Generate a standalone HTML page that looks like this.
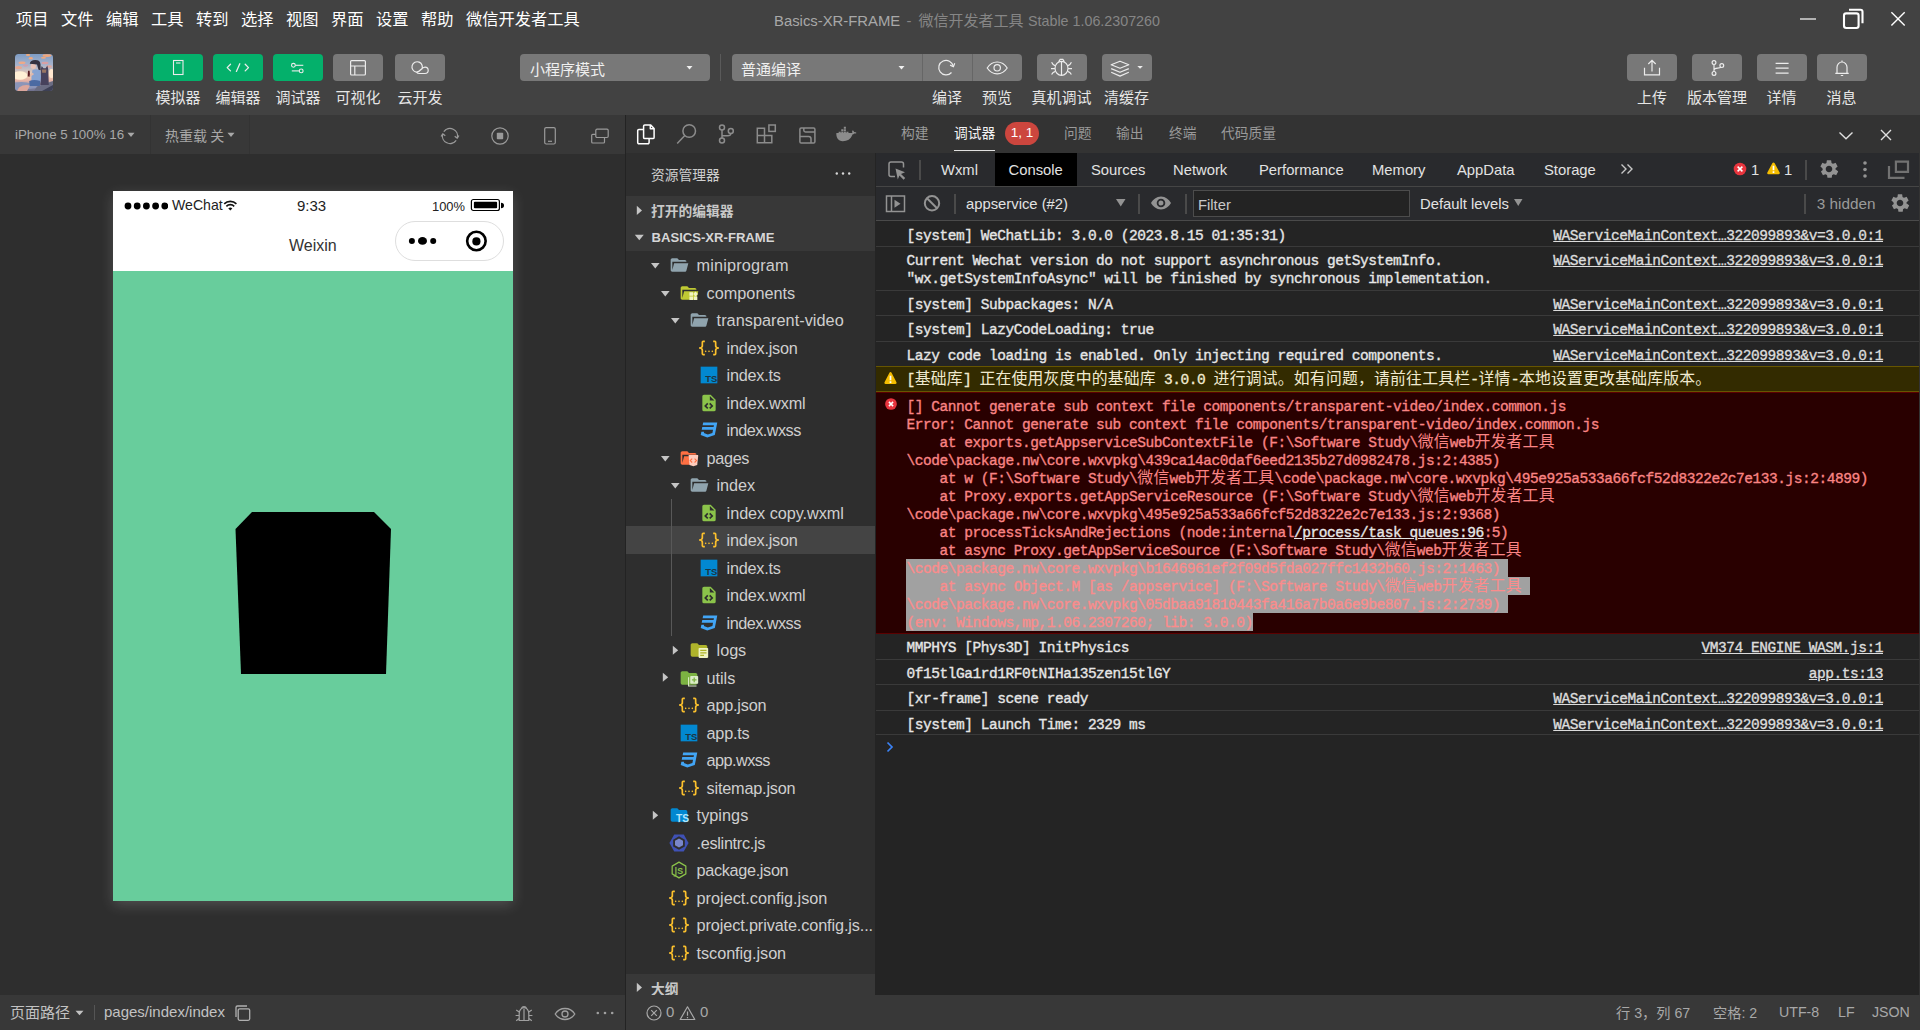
<!DOCTYPE html><html lang="zh"><head><meta charset="utf-8"><title>Basics-XR-FRAME - 微信开发者工具</title><style>
*{box-sizing:border-box;margin:0;padding:0}
html,body{width:1920px;height:1030px;overflow:hidden;background:#424242}
body{font-family:"Liberation Sans","Noto Sans CJK SC",sans-serif;color:#ddd;position:relative}
.abs{position:absolute}
.t{position:absolute;white-space:pre;line-height:1}
.cj{font-family:"Noto Sans CJK SC","Liberation Sans",sans-serif}
svg{position:absolute;overflow:visible}
.btn{position:absolute;top:54px;height:27px;background:#787878;border-radius:4px}
.btn.g{background:#04b06b}
.lbl{position:absolute;top:86.7px;font-size:15px;line-height:20px;color:#e6e6e6;white-space:pre;transform:translateX(-50%);font-family:"Noto Sans CJK SC",sans-serif}
.mono{font-family:"Liberation Mono","Noto Sans CJK SC",monospace;font-size:14.5px;letter-spacing:-0.457px;-webkit-text-stroke:0.35px currentColor;white-space:pre;line-height:18px}
.mono i{font-style:normal;font-size:15.85px;letter-spacing:.2px;-webkit-text-stroke:0;font-family:"Noto Sans CJK SC",sans-serif;line-height:18px;display:inline-block;vertical-align:top;position:relative;top:-2.1px}
.row{position:absolute;left:876px;width:1043px;border-bottom:1px solid #3a3a3a}
.msg{position:absolute;left:906px;color:#e3e3e3}
.src{position:absolute;right:37px;color:#d8d8d8;text-decoration:underline}
.tr{position:absolute;font-size:16.25px;line-height:20px;color:#cfcfcf;white-space:pre}
.tab{position:absolute;top:160.7px;font-size:14.8px;line-height:18px;color:#e2e2e2;white-space:pre}
.ptab{position:absolute;top:122.5px;font-size:13.75px;line-height:18px;color:#9a9a9a;white-space:pre;font-family:"Noto Sans CJK SC",sans-serif}
</style></head><body>
<div class="t cj" style="left:16px;top:6.8px;font-size:16.25px;line-height:22px;color:#fff">项目</div>
<div class="t cj" style="left:61px;top:6.8px;font-size:16.25px;line-height:22px;color:#fff">文件</div>
<div class="t cj" style="left:106px;top:6.8px;font-size:16.25px;line-height:22px;color:#fff">编辑</div>
<div class="t cj" style="left:151px;top:6.8px;font-size:16.25px;line-height:22px;color:#fff">工具</div>
<div class="t cj" style="left:196px;top:6.8px;font-size:16.25px;line-height:22px;color:#fff">转到</div>
<div class="t cj" style="left:241px;top:6.8px;font-size:16.25px;line-height:22px;color:#fff">选择</div>
<div class="t cj" style="left:286px;top:6.8px;font-size:16.25px;line-height:22px;color:#fff">视图</div>
<div class="t cj" style="left:331px;top:6.8px;font-size:16.25px;line-height:22px;color:#fff">界面</div>
<div class="t cj" style="left:376px;top:6.8px;font-size:16.25px;line-height:22px;color:#fff">设置</div>
<div class="t cj" style="left:421px;top:6.8px;font-size:16.25px;line-height:22px;color:#fff">帮助</div>
<div class="t cj" style="left:466px;top:6.8px;font-size:16.25px;line-height:22px;color:#fff">微信开发者工具</div>
<div class="t" style="left:774px;top:10.8px;font-size:14.85px;line-height:20px;color:#a8a8a8">Basics-XR-FRAME</div>
<div class="t" style="left:906.5px;top:10.8px;font-size:14.85px;line-height:20px;color:#868686">-</div>
<div class="t cj" style="left:918.5px;top:9.8px;font-size:15px;line-height:20px;color:#868686">微信开发者工具</div>
<div class="t" style="left:1028px;top:10.8px;font-size:14.3px;line-height:20px;color:#868686">Stable 1.06.2307260</div>
<svg style="left:1790px;top:0px" width="130" height="40" fill="none" stroke="#fff"><path d="M10 19h16" stroke="#d0d0d0" stroke-width="1.6"/><rect x="54" y="13.400" width="14.600" height="14.600" rx="2.200" stroke-width="2.100"/><path d="M59 9.800h11.500a2 2 0 0 1 2 2v11.500" stroke-width="2.100"/><path d="M101.400 12.300l13.300 13.300M114.700 12.300l-13.300 13.300" stroke-width="1.400"/></svg>
<svg style="left:15px;top:54px;border-radius:3.500px;overflow:hidden" width="38" height="37" viewBox="0 0 38 37">
<defs><linearGradient id="sky" x1="0" y1="0" x2="0" y2="1"><stop offset="0" stop-color="#7d9cc4"/><stop offset=".3" stop-color="#a8b4cc"/><stop offset=".58" stop-color="#f0cdb4"/><stop offset=".72" stop-color="#e6b3a6"/><stop offset=".86" stop-color="#8d8fb0"/><stop offset="1" stop-color="#6e6f8c"/></linearGradient>
<filter id="bl" x="-10%" y="-10%" width="120%" height="120%"><feGaussianBlur stdDeviation=".55"/></filter></defs>
<rect width="38" height="37" fill="url(#sky)"/>
<g filter="url(#bl)">
<ellipse cx="5" cy="21.500" rx="7.500" ry="4.300" fill="#fff0d6"/><ellipse cx="36.500" cy="19.500" rx="2.600" ry="4.500" fill="#ffe8d0"/>
<ellipse cx="13" cy="1" rx="2.200" ry=".9" fill="#f0a878"/><ellipse cx="15.800" cy="4.200" rx="2" ry="1.200" fill="#f2a87c"/><ellipse cx="32" cy="1.600" rx="4.500" ry="1.400" fill="#f2a67a"/><ellipse cx="28.500" cy="3.800" rx="2.500" ry="1" fill="#eea880"/><ellipse cx="7" cy="8.800" rx="3.500" ry="1.300" fill="#eea98a"/><ellipse cx="30" cy="9" rx="3.500" ry="1.200" fill="#d8a0a4"/><ellipse cx="3.500" cy="13.500" rx="3.500" ry="1.600" fill="#e8a890"/><ellipse cx="10.500" cy="11.600" rx="2.800" ry="1.100" fill="#cfa0b0"/><ellipse cx="34" cy="12.500" rx="3" ry="1.200" fill="#e0a8a0"/>
<path d="M0 28.500q9-1.500 16 1l8 4-24 3.500z" fill="#8b95b8"/>
<path d="M4 33.500q5-3.500 11-2l-3 5.500h-10z" fill="#dba69c"/>
<path d="M19 37l3-4.500 16-5.500v10z" fill="#6a6c82"/>
<path d="M27 37l11-6v6z" fill="#3e4054"/>
<path d="M25.800 15l.9-3 1.800 2.200h2.200l1.600-2.600.9 3.400.6 16h-8.500z" fill="#47435c"/>
<path d="M26.800 15.500h4.600l-.4 3.300h-3.800z" fill="#9a7664"/>
<path d="M17.500 16q3.500-1.600 7.500 0l1 6.500-.6 6h-9q-.6-6 1.100-12.500z" fill="#86a3d2"/>
<path d="M14.200 27q5-2.200 11 0l-.3 5h-10.200z" fill="#4c6aa2"/>
<ellipse cx="18.300" cy="12.300" rx="2.700" ry="2.700" fill="#e9c4b8"/>
<path d="M14.800 9.800q.5-3.800 5.500-3.700t5.200 4.200l.2 6-2.200-.5-1.500-5.300-4.500-.5z" fill="#35333f"/>
<path d="M13 16.800h1.600l.5 5.600h-2.400z" fill="#581c24"/>
<path d="M14.500 21l3.500-2.500.8 2-3.800 2.300z" fill="#e0b8ac"/>
</g></svg>
<div class="btn g" style="left:153px;width:50px"></div>
<div class="btn g" style="left:213px;width:50px"></div>
<div class="btn g" style="left:273px;width:50px"></div>
<div class="btn " style="left:333px;width:50px"></div>
<div class="btn " style="left:395px;width:50px"></div>
<div class="lbl" style="left:178px">模拟器</div>
<div class="lbl" style="left:238px">编辑器</div>
<div class="lbl" style="left:298px">调试器</div>
<div class="lbl" style="left:358px">可视化</div>
<div class="lbl" style="left:420px">云开发</div>
<svg style="left:153px;top:54px" width="50" height="27" fill="none" stroke="#ececec" stroke-width="1.1"><rect x="20.5" y="6.5" width="9.500" height="14"/><path d="M23 9h4.500"/></svg>
<svg style="left:213px;top:54px" width="50" height="27" fill="none" stroke="#ececec" stroke-width="1.3" stroke-linecap="round" stroke-linejoin="round"><path d="M17.500 10.300l-3.300 3.300 3.300 3.300M32.200 10.300l3.300 3.300-3.300 3.300M26.800 9.800l-3.400 7.600"/></svg>
<svg style="left:273px;top:54px" width="50" height="27" fill="none" stroke="#ececec" stroke-width="1.1"><circle cx="20.400" cy="11.300" r="1.900"/><path d="M22.300 11.300h8"/><circle cx="28.200" cy="16.900" r="1.900"/><path d="M18.800 16.900h7.500"/></svg>
<svg style="left:333px;top:54px" width="50" height="27" fill="none" stroke="#ececec" stroke-width="1.2"><rect x="17.600" y="6.600" width="14.800" height="14.400" rx="1"/><path d="M17.600 12h14.800M21.800 12v9"/></svg>
<svg style="left:392.800px;top:54px" width="50" height="27" fill="none" stroke="#ececec" stroke-width="1.2"><path d="M28.700 15.500a5.200 5.200 0 1 0-5.300 2.600M23.400 18.100c2.200 0 3.400-1.200 4.600-2.600s2.300-2.400 4-2.400a3.200 3.200 0 0 1 0 6.400h-5.500c-1.500 0-2.400-.5-3.100-1.400"/></svg>
<div class="btn " style="left:520px;width:190px"></div>
<div class="t cj" style="left:530px;top:59px;font-size:15px;line-height:20px;color:#f0f0f0">小程序模式</div>
<svg style="left:685px;top:65px" width="10" height="6"><path d="M1.500 1h6l-3 3.600z" fill="#f0f0f0"/></svg>
<div class="abs" style="left:720px;top:54px;width:1px;height:27px;background:#5a5a5a"></div>
<div class="btn " style="left:732px;width:290px"></div>
<div class="t cj" style="left:741px;top:59px;font-size:15px;line-height:20px;color:#f0f0f0">普通编译</div>
<svg style="left:897px;top:65px" width="10" height="6"><path d="M1.500 1h6l-3 3.600z" fill="#f0f0f0"/></svg>
<div class="abs" style="left:922px;top:54px;width:1px;height:27px;background:#666"></div>
<div class="abs" style="left:972px;top:54px;width:1px;height:27px;background:#666"></div>
<svg style="left:922.300px;top:54.800px" width="50" height="27" fill="none" stroke="#ececec" stroke-width="1.2"><path d="M29.500 17.500a7.300 7.300 0 1 1 1.700-6.300"/><path d="M32.700 8.300l-1.300 3.500-3.300-1.700" stroke-linejoin="round"/></svg>
<svg style="left:972px;top:54px" width="50" height="27" fill="none" stroke="#ececec" stroke-width="1.2"><path d="M15.200 14c3-4.700 7-6 10-6s7 1.300 10 6c-3 4.500-7 5.800-10 5.800s-7-1.300-10-5.800z"/><circle cx="25.200" cy="13.800" r="3.200"/></svg>
<div class="btn " style="left:1037px;width:50px"></div>
<div class="btn " style="left:1102px;width:50px"></div>
<svg style="left:1037px;top:54px" width="50" height="27" fill="none" stroke="#ececec" stroke-width="1.2"><ellipse cx="24.500" cy="14.300" rx="6.500" ry="7"/><path d="M24.500 7.300v14"/><path d="M21.700 7.600l1.500-2.300h2.600l1.500 2.300"/><path d="M18.400 11.800q-2.600-.6-3.800-3.500M17.900 14.600h-3.900M18.400 17.300q-2.600 .6-3.800 3.200M30.600 11.800q2.600-.6 3.800-3.500M31.100 14.600h3.900M30.600 17.300q2.600 .6 3.800 3.200"/></svg>
<svg style="left:1102px;top:54px" width="50" height="27" fill="none" stroke="#ececec" stroke-width="1.2" stroke-linejoin="round"><path d="M18 7.200l-8.800 3.500 8.800 3.500 8.800-3.500z"/><path d="M9.200 14.600l8.800 3.700 8.800-3.700M9.200 18.300l8.800 3.800 8.800-3.800"/><path d="M35.300 11.900h5.600l-2.800 2.800z" fill="#ececec" stroke="none"/></svg>
<div class="lbl" style="left:947px">编译</div>
<div class="lbl" style="left:997px">预览</div>
<div class="lbl" style="left:1061.5px">真机调试</div>
<div class="lbl" style="left:1126.5px">清缓存</div>
<div class="btn " style="left:1627px;width:50px"></div>
<div class="btn " style="left:1692px;width:50px"></div>
<div class="btn " style="left:1757px;width:50px"></div>
<div class="btn " style="left:1817px;width:50px"></div>
<div class="lbl" style="left:1652px">上传</div>
<div class="lbl" style="left:1717px">版本管理</div>
<div class="lbl" style="left:1781.5px">详情</div>
<div class="lbl" style="left:1841.5px">消息</div>
<svg style="left:1627px;top:54px" width="50" height="27" fill="none" stroke="#ececec" stroke-width="1.2"><path d="M17.500 13.800v7h15v-7"/><path d="M25 17.500v-11M21.300 10l3.700-3.700 3.700 3.700"/></svg>
<svg style="left:1692px;top:54px" width="50" height="27" fill="none" stroke="#ececec" stroke-width="1.2"><circle cx="22" cy="8.600" r="1.900"/><circle cx="22" cy="19.400" r="1.900"/><circle cx="29.800" cy="11.600" r="1.900"/><path d="M22 10.500v7M22 16c0-3 6-1 6.800-3"/></svg>
<svg style="left:1757px;top:54px" width="50" height="27" fill="none" stroke="#ececec" stroke-width="1.300"><path d="M18.600 9.300h13M18.600 14.200h13M18.600 19.100h13"/></svg>
<svg style="left:1817px;top:54px" width="50" height="27" fill="none" stroke="#ececec" stroke-width="1.200"><path d="M18.300 19.300h13.400M20 19.300v-6a5 5.300 0 0 1 10 0v6M25 6.500v1.500M23.800 21.500h2.400"/></svg>
<div class="abs" style="left:0;top:115px;width:625px;height:39px;background:#383838"></div>
<div class="abs" style="left:150px;top:115px;width:1px;height:39px;background:#333"></div>
<div class="abs" style="left:249px;top:115px;width:1px;height:39px;background:#333"></div>
<div class="t" style="left:15px;top:126px;font-size:13.35px;line-height:18px;color:#a8a8a8">iPhone 5 100% 16</div>
<svg style="left:127px;top:132px" width="8" height="6"><path d="M0.500 0.800h7l-3.500 4.200z" fill="#a8a8a8"/></svg>
<div class="t cj" style="left:165px;top:125px;font-size:14px;line-height:20px;color:#a8a8a8">热重载 关</div>
<svg style="left:227px;top:132px" width="8" height="6"><path d="M0.500 0.800h7l-3.500 4.200z" fill="#a8a8a8"/></svg>
<svg style="left:440px;top:125px" width="20" height="20" fill="none" stroke="#9a9a9a" stroke-width="1.2"><path d="M3.800 6.600A7.600 7.600 0 0 1 17.300 13"/><path d="M16.200 15.400A7.600 7.600 0 0 1 2.700 9"/><path d="M14.700 11.300l2.600 1.900 1.600-2.700M5.300 10.700l-2.600-1.900-1.600 2.700" stroke-linejoin="round"/></svg>
<svg style="left:490px;top:125px" width="20" height="20" fill="none" stroke="#9a9a9a" stroke-width="1.200"><circle cx="10" cy="11" r="8.200"/><rect x="6.800" y="7.800" width="6.400" height="6.400" rx=".8" fill="#9a9a9a" stroke="none"/></svg>
<svg style="left:540px;top:125px" width="20" height="20" fill="none" stroke="#9a9a9a" stroke-width="1.200"><rect x="4.700" y="2.600" width="10.600" height="16.400" rx="1.500"/><path d="M8 16.300h4"/></svg>
<svg style="left:590px;top:125px" width="20" height="20" fill="none" stroke="#9a9a9a" stroke-width="1.200"><rect x="5.800" y="4.200" width="12.400" height="8.300" rx="1.200"/><path d="M5.800 9.300h-3.100a1 1 0 0 0-1 1v6.700a1 1 0 0 0 1 1h10.800a1 1 0 0 0 1-1v-4.500"/></svg>
<div class="abs" style="left:0;top:154px;width:625px;height:841px;background:#2e2e2e"></div>
<div class="abs" style="left:113px;top:191px;width:400px;height:710px;background:#68cd9c;box-shadow:0 4px 13px rgba(255,255,255,.17)"></div>
<div class="abs" style="left:113px;top:191px;width:400px;height:80px;background:#fff"></div>
<svg style="left:124px;top:200px;overflow:hidden" width="43.500" height="12" fill="#000"><circle cx="4" cy="6" r="3.400"/><circle cx="13.200" cy="6" r="3.400"/><circle cx="22.400" cy="6" r="3.400"/><circle cx="31.600" cy="6" r="3.400"/><circle cx="40.800" cy="6" r="3.400"/></svg>
<div class="t" style="left:172px;top:196px;font-size:14.1px;line-height:18px;color:#222">WeChat</div>
<svg style="left:223.400px;top:199.600px" width="14.600" height="11" viewBox="0 0 16 12" fill="none" stroke="#111" stroke-width="1.800"><path d="M1.300 4.200a9.500 9.500 0 0 1 13.400 0M3.700 6.900a6 6 0 0 1 8.600 0"/><path d="M5.800 9.300a3.100 3.100 0 0 1 4.400 0l-2.200 2.300z" fill="#111" stroke="none"/></svg>
<div class="t" style="left:297px;top:197px;font-size:15px;line-height:18px;color:#222">9:33</div>
<div class="t" style="left:432px;top:197.5px;font-size:12.9px;line-height:18px;color:#222">100%</div>
<svg style="left:470px;top:198px" width="36" height="15" fill="none"><rect x="1.400" y="1.500" width="28" height="11" rx="2" stroke="#000" stroke-width="1.200"/><rect x="3.900" y="3.800" width="23.200" height="6.500" rx="1" fill="#000"/><path d="M31 4.800q3 0 3 2.700t-3 2.700z" fill="#000"/></svg>
<div class="t" style="left:289px;top:236px;font-size:16px;line-height:20px;color:#333">Weixin</div>
<div class="abs" style="left:395px;top:221px;width:109px;height:40px;border:1px solid #dedede;border-radius:20px;background:#fff"></div>
<svg style="left:395px;top:221px" width="109" height="40"><circle cx="16.900" cy="19.900" r="3" fill="#000"/><ellipse cx="27.500" cy="19.900" rx="4.500" ry="3.900" fill="#000"/><circle cx="38.200" cy="19.900" r="3" fill="#000"/><circle cx="81.400" cy="20" r="9.250" fill="none" stroke="#000" stroke-width="2.600"/><circle cx="81.400" cy="20.400" r="4.100" fill="#000"/></svg>
<svg style="left:113px;top:271px" width="400" height="630"><path d="M139 241h122l17 17l-5 145h-145l-5.500-145z" fill="#000"/></svg>
<div class="abs" style="left:0;top:995px;width:625px;height:35px;background:#383838"></div>
<div class="t cj" style="left:10px;top:1002px;font-size:15px;line-height:20px;color:#c2c2c2">页面路径</div>
<svg style="left:75px;top:1010px" width="9" height="6"><path d="M0.500 0.800h8l-4 4.400z" fill="#c2c2c2"/></svg>
<div class="abs" style="left:94px;top:1005px;width:1px;height:15px;background:#555"></div>
<div class="t" style="left:104px;top:1003px;font-size:15px;line-height:18px;color:#c2c2c2">pages/index/index</div>
<svg style="left:234px;top:1004px" width="18" height="18" fill="none" stroke="#b0b0b0" stroke-width="1.300"><rect x="4.200" y="4.800" width="11.500" height="11.500" rx="1.500"/><path d="M2 13v-9.500a1.500 1.500 0 0 1 1.500-1.500h9.500"/></svg>
<svg style="left:512px;top:1002px" width="24" height="22" fill="none" stroke="#a0a0a0" stroke-width="1.200"><path d="M7.200 18.500v-7a4.800 6 0 0 1 9.600 0v7z"/><path d="M12 6.500v12M9.500 6.500a2.600 2.600 0 0 1 5 0"/><path d="M7.200 10l-3-2M16.800 10l3-2M7.200 13.500h-3.600M16.800 13.500h3.600M7.200 16.500l-3 2.200M16.800 16.500l3 2.200"/></svg>
<svg style="left:553px;top:1004px" width="24" height="20" fill="none" stroke="#a0a0a0" stroke-width="1.300"><path d="M2.200 10c2.500-4 6-5.500 9.800-5.500s7.300 1.500 9.800 5.500c-2.500 4-6 5.500-9.800 5.500s-7.300-1.500-9.800-5.500z"/><circle cx="12" cy="10" r="3"/></svg>
<svg style="left:595px;top:1010px" width="20" height="6" fill="#a0a0a0"><circle cx="2.800" cy="3" r="1.300"/><circle cx="10" cy="3" r="1.300"/><circle cx="17.200" cy="3" r="1.300"/></svg>
<div class="abs" style="left:625px;top:115px;width:1px;height:915px;background:#232323"></div>
<div class="abs" style="left:626px;top:115px;width:1294px;height:38px;background:#333"></div>
<div class="abs" style="left:626px;top:153px;width:249px;height:842px;background:#2e2e2e"></div>
<svg style="left:634px;top:121px" width="24" height="24" fill="none" stroke="#fff" stroke-width="1.500" stroke-linejoin="round"><path d="M10.800 3.900h5.700l3.600 3.600v8.900a1.200 1.200 0 0 1-1.200 1.200h-8.100a1.200 1.200 0 0 1-1.200-1.200v-11.300a1.200 1.200 0 0 1 1.200-1.200z"/><path d="M9.600 8.400h-4.700a1.200 1.200 0 0 0-1.200 1.200v11.900a1.200 1.200 0 0 0 1.200 1.200h9a1.200 1.200 0 0 0 1.200-1.200v-3.900"/><path d="M16.300 4v3.700h3.700"/></svg>
<svg style="left:674px;top:121px" width="24" height="24" fill="none" stroke="#8c8c8c" stroke-width="1.500"><circle cx="15.200" cy="10" r="6.300"/><path d="M10.800 14.500l-7.600 8"/></svg>
<svg style="left:714px;top:121px" width="24" height="24" fill="none" stroke="#8c8c8c" stroke-width="1.500"><circle cx="8" cy="6.400" r="2.500"/><circle cx="8" cy="19.400" r="2.500"/><circle cx="16.800" cy="9.900" r="2.500"/><path d="M8 8.900v8M16.800 12.400c0 2.200-1.400 2.300-3.200 2.300h-5.600"/></svg>
<svg style="left:754px;top:121px" width="24" height="24" fill="none" stroke="#8c8c8c" stroke-width="1.500"><path d="M3.300 7.300h7.200v7.300h7.300v7.200h-14.500zM10.500 14.600v7.200M3.300 14.600h7.200"/><rect x="14.900" y="4" width="6.400" height="6.400"/></svg>
<svg style="left:795px;top:121px" width="24" height="24" fill="none" stroke="#8c8c8c" stroke-width="1.500"><rect x="4.900" y="7" width="15" height="15" rx="1.300"/><path d="M8.800 7v2.300q0 1.700 1.700 1.700h9.400M4.900 15.500h8.800q2.300 0 2.300 2.300v4.200"/></svg>
<svg style="left:835px;top:125.500px" width="22" height="17" viewBox="0 0 24 18.500" fill="#8c8c8c"><path d="M1 9.500h17.500c1 0 2-.5 2.500-1.300.8.200 1.800.1 2.500-.5-.6-.8-1.600-1.200-2.600-1-.2-1-.8-1.700-1.600-2.200-.7.900-.8 2-.3 3h-17.500c-.5 4.500 2 9 7 9 5 0 8.500-2 10.500-7z"/><path d="M4 6.200h2.300v2.300h-2.300zM6.800 6.200h2.300v2.300h-2.300zM9.600 6.200h2.300v2.300h-2.300zM12.400 6.200h2.300v2.300h-2.300zM6.800 3.500h2.300v2.300h-2.300zM9.600 3.500h2.300v2.300h-2.300zM9.600 .8h2.300v2.300h-2.300z"/></svg>
<div class="t cj" style="left:651px;top:163.700px;font-size:13.75px;line-height:20px;color:#cfcfcf">资源管理器</div>
<svg style="left:834.500px;top:171.300px" width="18" height="5" fill="#d8d8d8"><circle cx="1.800" cy="2.500" r="1.200"/><circle cx="8" cy="2.500" r="1.200"/><circle cx="14.200" cy="2.500" r="1.200"/></svg>
<div class="abs" style="left:626px;top:196px;width:249px;height:55px;background:#383838"></div>
<svg style="left:636px;top:205px" width="8" height="11"><path d="M0.800 0.800l5.200 4.600-5.200 4.600z" fill="#c5c5c5"/></svg>
<div class="t cj" style="left:651px;top:200px;font-size:13.75px;line-height:20px;color:#c8c8c8;font-weight:bold">打开的编辑器</div>
<svg style="left:634px;top:234px" width="11" height="8"><path d="M0.800 0.800h9l-4.500 5.400z" fill="#c5c5c5"/></svg>
<div class="t" style="left:651.500px;top:229px;font-size:13.1px;line-height:18px;color:#d6d6d6;font-weight:bold">BASICS-XR-FRAME</div>
<div class="abs" style="left:626px;top:526px;width:249px;height:28px;background:#444"></div>
<div class="abs" style="left:671px;top:499px;width:1px;height:137px;background:#585858"></div>
<svg style="left:649.5px;top:262.00px" width="11" height="8"><path d="M1 1h8.600l-4.300 5.600z" fill="#c5c5c5"/></svg>
<svg style="left:669px;top:255.00px" width="20" height="20" viewBox="0 0 24 24"><path d="M19 20H4c-1.110 0-2-.9-2-2V6c0-1.110.89-2 2-2h6l2 2h7a2 2 0 0 1 2 2H4v10l2.140-8h17.070l-2.280 8.500c-.23.870-1.010 1.500-1.930 1.500z" fill="#90a4ae"/></svg>
<div class="tr" style="left:696.6px;top:255.20px;letter-spacing:0.172px">miniprogram</div>
<svg style="left:659.5px;top:289.50px" width="11" height="8"><path d="M1 1h8.600l-4.300 5.600z" fill="#c5c5c5"/></svg>
<svg style="left:679px;top:282.50px" width="20" height="20" viewBox="0 0 24 24"><path d="M19 20H4c-1.110 0-2-.9-2-2V6c0-1.110.89-2 2-2h6l2 2h7a2 2 0 0 1 2 2H4v10l2.140-8h17.070l-2.280 8.500c-.23.870-1.010 1.500-1.930 1.500z" fill="#c0ca33"/><path d="M12.500 11h4.300v4.300h-4.300zM12.500 16.200h4.300v4.300h-4.300zM17.700 16.200h4.300v4.300h-4.300z" fill="#f0f4c3"/><path d="M19.850 10.300l2.900 2.900-2.900 2.900-2.900-2.900z" fill="#f0f4c3"/></svg>
<div class="tr" style="left:706.6px;top:282.70px;letter-spacing:0.007px">components</div>
<svg style="left:669.5px;top:317.00px" width="11" height="8"><path d="M1 1h8.600l-4.300 5.600z" fill="#c5c5c5"/></svg>
<svg style="left:689px;top:310.00px" width="20" height="20" viewBox="0 0 24 24"><path d="M19 20H4c-1.110 0-2-.9-2-2V6c0-1.110.89-2 2-2h6l2 2h7a2 2 0 0 1 2 2H4v10l2.140-8h17.070l-2.280 8.500c-.23.870-1.010 1.500-1.930 1.500z" fill="#90a4ae"/></svg>
<div class="tr" style="left:716.6px;top:310.20px;letter-spacing:0.038px">transparent-video</div>
<svg style="left:699px;top:337.50px" width="20" height="20" viewBox="0 0 24 24"><path d="M5 3h2v2H5v5a2 2 0 0 1-2 2 2 2 0 0 1 2 2v5h2v2H5c-1.070-.27-2-.9-2-2v-4a2 2 0 0 0-2-2H0v-2h1a2 2 0 0 0 2-2V5a2 2 0 0 1 2-2m14 0a2 2 0 0 1 2 2v4a2 2 0 0 0 2 2h1v2h-1a2 2 0 0 0-2 2v4a2 2 0 0 1-2 2h-2v-2h2v-5a2 2 0 0 1 2-2 2 2 0 0 1-2-2V5h-2V3h2m-7 12a1 1 0 0 1 1 1 1 1 0 0 1-1 1 1 1 0 0 1-1-1 1 1 0 0 1 1-1m-4 0a1 1 0 0 1 1 1 1 1 0 0 1-1 1 1 1 0 0 1-1-1 1 1 0 0 1 1-1m8 0a1 1 0 0 1 1 1 1 1 0 0 1-1 1 1 1 0 0 1-1-1 1 1 0 0 1 1-1z" fill="#fbc02d"/></svg>
<div class="tr" style="left:726.6px;top:337.70px;letter-spacing:-0.207px">index.json</div>
<svg style="left:699px;top:365.00px" width="20" height="20" viewBox="0 0 24 24"><rect x="2" y="2" width="20" height="20" fill="#0288d1"/><text x="7.400" y="20" font-family="Liberation Sans,sans-serif" font-weight="bold" font-size="11.300" fill="#1d3442">TS</text></svg>
<div class="tr" style="left:726.6px;top:365.20px;letter-spacing:-0.263px">index.ts</div>
<svg style="left:699px;top:392.50px" width="20" height="20" viewBox="0 0 24 24"><path d="M13 9h5.500L13 3.500V9M6 2h8l6 6v12a2 2 0 0 1-2 2H6a2 2 0 0 1-2-2V4c0-1.110.89-2 2-2m.12 13.500l3.740 3.740 1.420-1.410-2.330-2.330 2.330-2.330-1.420-1.410-3.740 3.740m11.160 0l-3.740-3.740-1.420 1.410 2.330 2.330-2.330 2.330 1.420 1.410 3.740-3.740z" fill="#8bc34a"/></svg>
<div class="tr" style="left:726.6px;top:392.70px;letter-spacing:-0.147px">index.wxml</div>
<svg style="left:699px;top:420.00px" width="20" height="20" viewBox="0 0 24 24"><path d="M5 3l-.65 3.340h13.590L17.500 8.500H3.920l-.66 3.330h13.590l-.76 3.810-5.480 1.810-4.750-1.810.33-1.640H2.850l-.79 4 7.850 3 9.050-3 1.200-6.030.24-1.210L21.940 3H5z" fill="#42a5f5"/></svg>
<div class="tr" style="left:726.6px;top:420.20px;letter-spacing:-0.527px">index.wxss</div>
<svg style="left:659.5px;top:454.50px" width="11" height="8"><path d="M1 1h8.600l-4.300 5.600z" fill="#c5c5c5"/></svg>
<svg style="left:679px;top:447.50px" width="20" height="20" viewBox="0 0 24 24"><path d="M19 20H4c-1.110 0-2-.9-2-2V6c0-1.110.89-2 2-2h6l2 2h7a2 2 0 0 1 2 2H4v10l2.140-8h17.070l-2.280 8.500c-.23.870-1.010 1.500-1.930 1.500z" fill="#ff7043"/><path d="M11.500 8.500h11.500l-1.100 12-4.650 1.500-4.650-1.500z" fill="#ffccbc"/><path d="M15.800 12.800l-2.300 2.300 2.300 2.300M18.700 12.800l2.300 2.300-2.300 2.300" fill="none" stroke="#ff7043" stroke-width="1.300"/></svg>
<div class="tr" style="left:706.6px;top:447.70px;letter-spacing:-0.355px">pages</div>
<svg style="left:669.5px;top:482.00px" width="11" height="8"><path d="M1 1h8.600l-4.300 5.600z" fill="#c5c5c5"/></svg>
<svg style="left:689px;top:475.00px" width="20" height="20" viewBox="0 0 24 24"><path d="M19 20H4c-1.110 0-2-.9-2-2V6c0-1.110.89-2 2-2h6l2 2h7a2 2 0 0 1 2 2H4v10l2.140-8h17.070l-2.280 8.500c-.23.870-1.010 1.500-1.930 1.500z" fill="#90a4ae"/></svg>
<div class="tr" style="left:716.6px;top:475.20px;letter-spacing:-0.11px">index</div>
<svg style="left:699px;top:502.50px" width="20" height="20" viewBox="0 0 24 24"><path d="M13 9h5.500L13 3.500V9M6 2h8l6 6v12a2 2 0 0 1-2 2H6a2 2 0 0 1-2-2V4c0-1.110.89-2 2-2m.12 13.500l3.740 3.740 1.420-1.410-2.330-2.330 2.330-2.330-1.420-1.410-3.740 3.740m11.160 0l-3.740-3.740-1.420 1.410 2.330 2.330-2.330 2.330 1.420 1.410 3.740-3.740z" fill="#8bc34a"/></svg>
<div class="tr" style="left:726.6px;top:502.70px;letter-spacing:-0.054px">index copy.wxml</div>
<svg style="left:699px;top:530.00px" width="20" height="20" viewBox="0 0 24 24"><path d="M5 3h2v2H5v5a2 2 0 0 1-2 2 2 2 0 0 1 2 2v5h2v2H5c-1.070-.27-2-.9-2-2v-4a2 2 0 0 0-2-2H0v-2h1a2 2 0 0 0 2-2V5a2 2 0 0 1 2-2m14 0a2 2 0 0 1 2 2v4a2 2 0 0 0 2 2h1v2h-1a2 2 0 0 0-2 2v4a2 2 0 0 1-2 2h-2v-2h2v-5a2 2 0 0 1 2-2 2 2 0 0 1-2-2V5h-2V3h2m-7 12a1 1 0 0 1 1 1 1 1 0 0 1-1 1 1 1 0 0 1-1-1 1 1 0 0 1 1-1m-4 0a1 1 0 0 1 1 1 1 1 0 0 1-1 1 1 1 0 0 1-1-1 1 1 0 0 1 1-1m8 0a1 1 0 0 1 1 1 1 1 0 0 1-1 1 1 1 0 0 1-1-1 1 1 0 0 1 1-1z" fill="#fbc02d"/></svg>
<div class="tr" style="left:726.6px;top:530.20px;letter-spacing:-0.207px">index.json</div>
<svg style="left:699px;top:557.50px" width="20" height="20" viewBox="0 0 24 24"><rect x="2" y="2" width="20" height="20" fill="#0288d1"/><text x="7.400" y="20" font-family="Liberation Sans,sans-serif" font-weight="bold" font-size="11.300" fill="#1d3442">TS</text></svg>
<div class="tr" style="left:726.6px;top:557.70px;letter-spacing:-0.263px">index.ts</div>
<svg style="left:699px;top:585.00px" width="20" height="20" viewBox="0 0 24 24"><path d="M13 9h5.500L13 3.500V9M6 2h8l6 6v12a2 2 0 0 1-2 2H6a2 2 0 0 1-2-2V4c0-1.110.89-2 2-2m.12 13.500l3.740 3.740 1.420-1.410-2.330-2.330 2.330-2.330-1.420-1.410-3.740 3.740m11.160 0l-3.740-3.740-1.420 1.410 2.330 2.330-2.330 2.330 1.420 1.410 3.740-3.740z" fill="#8bc34a"/></svg>
<div class="tr" style="left:726.6px;top:585.20px;letter-spacing:-0.147px">index.wxml</div>
<svg style="left:699px;top:612.50px" width="20" height="20" viewBox="0 0 24 24"><path d="M5 3l-.65 3.340h13.590L17.500 8.500H3.920l-.66 3.330h13.590l-.76 3.810-5.480 1.810-4.750-1.810.33-1.640H2.850l-.79 4 7.850 3 9.050-3 1.200-6.030.24-1.210L21.940 3H5z" fill="#42a5f5"/></svg>
<div class="tr" style="left:726.6px;top:612.70px;letter-spacing:-0.527px">index.wxss</div>
<svg style="left:672px;top:644.50px" width="8" height="11"><path d="M0.800 0.800l5.400 4.500-5.400 4.500z" fill="#c5c5c5"/></svg>
<svg style="left:689px;top:640.00px" width="20" height="20" viewBox="0 0 24 24"><path d="M10 4H4c-1.110 0-2 .89-2 2v12a2 2 0 0 0 2 2h16a2 2 0 0 0 2-2V8c0-1.110-.9-2-2-2h-8l-2-2z" fill="#afb42b"/><rect x="11.500" y="9.500" width="11.500" height="12" rx="1" fill="#f0f4c3"/><path d="M13.500 12.500h7.500M13.500 15.500h7.500M13.500 18.500h4.500" stroke="#afb42b" stroke-width="1.500"/></svg>
<div class="tr" style="left:716.6px;top:640.20px;letter-spacing:-0.053px">logs</div>
<svg style="left:662px;top:672.00px" width="8" height="11"><path d="M0.800 0.800l5.400 4.500-5.400 4.500z" fill="#c5c5c5"/></svg>
<svg style="left:679px;top:667.50px" width="20" height="20" viewBox="0 0 24 24"><path d="M10 4H4c-1.110 0-2 .89-2 2v12a2 2 0 0 0 2 2h16a2 2 0 0 0 2-2V8c0-1.110-.9-2-2-2h-8l-2-2z" fill="#7cb342"/><path d="M11.500 11v10.500h9.500" fill="none" stroke="#dcedc8" stroke-width="1.300"/><rect x="13.500" y="9.500" width="9.500" height="9.500" rx="1" fill="#dcedc8"/><path d="M18.250 11.500v5.500M15.500 14.250h5.500" stroke="#7cb342" stroke-width="1.500"/></svg>
<div class="tr" style="left:706.6px;top:667.70px;letter-spacing:-0.06px">utils</div>
<svg style="left:679px;top:695.00px" width="20" height="20" viewBox="0 0 24 24"><path d="M5 3h2v2H5v5a2 2 0 0 1-2 2 2 2 0 0 1 2 2v5h2v2H5c-1.070-.27-2-.9-2-2v-4a2 2 0 0 0-2-2H0v-2h1a2 2 0 0 0 2-2V5a2 2 0 0 1 2-2m14 0a2 2 0 0 1 2 2v4a2 2 0 0 0 2 2h1v2h-1a2 2 0 0 0-2 2v4a2 2 0 0 1-2 2h-2v-2h2v-5a2 2 0 0 1 2-2 2 2 0 0 1-2-2V5h-2V3h2m-7 12a1 1 0 0 1 1 1 1 1 0 0 1-1 1 1 1 0 0 1-1-1 1 1 0 0 1 1-1m-4 0a1 1 0 0 1 1 1 1 1 0 0 1-1 1 1 1 0 0 1-1-1 1 1 0 0 1 1-1m8 0a1 1 0 0 1 1 1 1 1 0 0 1-1 1 1 1 0 0 1-1-1 1 1 0 0 1 1-1z" fill="#fbc02d"/></svg>
<div class="tr" style="left:706.6px;top:695.20px;letter-spacing:-0.217px">app.json</div>
<svg style="left:679px;top:722.50px" width="20" height="20" viewBox="0 0 24 24"><rect x="2" y="2" width="20" height="20" fill="#0288d1"/><text x="7.400" y="20" font-family="Liberation Sans,sans-serif" font-weight="bold" font-size="11.300" fill="#1d3442">TS</text></svg>
<div class="tr" style="left:706.6px;top:722.70px;letter-spacing:-0.261px">app.ts</div>
<svg style="left:679px;top:750.00px" width="20" height="20" viewBox="0 0 24 24"><path d="M5 3l-.65 3.340h13.590L17.500 8.500H3.920l-.66 3.330h13.590l-.76 3.810-5.480 1.810-4.750-1.810.33-1.640H2.850l-.79 4 7.850 3 9.050-3 1.200-6.030.24-1.210L21.940 3H5z" fill="#42a5f5"/></svg>
<div class="tr" style="left:706.6px;top:750.20px;letter-spacing:-0.555px">app.wxss</div>
<svg style="left:679px;top:777.50px" width="20" height="20" viewBox="0 0 24 24"><path d="M5 3h2v2H5v5a2 2 0 0 1-2 2 2 2 0 0 1 2 2v5h2v2H5c-1.070-.27-2-.9-2-2v-4a2 2 0 0 0-2-2H0v-2h1a2 2 0 0 0 2-2V5a2 2 0 0 1 2-2m14 0a2 2 0 0 1 2 2v4a2 2 0 0 0 2 2h1v2h-1a2 2 0 0 0-2 2v4a2 2 0 0 1-2 2h-2v-2h2v-5a2 2 0 0 1 2-2 2 2 0 0 1-2-2V5h-2V3h2m-7 12a1 1 0 0 1 1 1 1 1 0 0 1-1 1 1 1 0 0 1-1-1 1 1 0 0 1 1-1m-4 0a1 1 0 0 1 1 1 1 1 0 0 1-1 1 1 1 0 0 1-1-1 1 1 0 0 1 1-1m8 0a1 1 0 0 1 1 1 1 1 0 0 1-1 1 1 1 0 0 1-1-1 1 1 0 0 1 1-1z" fill="#fbc02d"/></svg>
<div class="tr" style="left:706.6px;top:777.70px;letter-spacing:-0.202px">sitemap.json</div>
<svg style="left:652px;top:809.50px" width="8" height="11"><path d="M0.800 0.800l5.400 4.500-5.400 4.500z" fill="#c5c5c5"/></svg>
<svg style="left:669px;top:805.00px" width="20" height="20" viewBox="0 0 24 24"><path d="M10 4H4c-1.110 0-2 .89-2 2v12a2 2 0 0 0 2 2h16a2 2 0 0 0 2-2V8c0-1.110-.9-2-2-2h-8l-2-2z" fill="#0288d1"/><text x="8.400" y="20.400" font-family="Liberation Sans,sans-serif" font-weight="bold" font-size="12.300" fill="#b3e5fc" stroke="#0288d1" stroke-width=".5" paint-order="stroke">TS</text></svg>
<div class="tr" style="left:696.6px;top:805.20px;letter-spacing:0.03px">typings</div>
<svg style="left:669px;top:832.50px" width="20" height="20" viewBox="0 0 24 24"><path d="M6.300 1.700h11.400l5.800 10.300-5.800 10.300h-11.400l-5.800-10.300z" fill="#3f51b5"/><path d="M12 3.900l7 4.050v8.100l-7 4.050-7-4.050v-8.100z" fill="#2e2e2e"/><path d="M12 6.500l4.800 2.750v5.500l-4.800 2.750-4.800-2.750v-5.500z" fill="#7986cb"/></svg>
<div class="tr" style="left:696.6px;top:832.70px;letter-spacing:-0.32px">.eslintrc.js</div>
<svg style="left:669px;top:860.00px" width="20" height="20" viewBox="0 0 24 24"><path d="M12 2.600l8.200 4.700v9.400l-8.200 4.700-8.200-4.700v-9.400z" fill="none" stroke="#8bc34a" stroke-width="1.500" stroke-linejoin="round"/><path d="M8.300 8.400v9.300c0 1.400-1.200 1.900-2.700 1.100" fill="none" stroke="#8bc34a" stroke-width="1.400"/><text x="9.900" y="16.300" font-family="Liberation Sans,sans-serif" font-weight="bold" font-size="10.600" fill="#8bc34a">S</text></svg>
<div class="tr" style="left:696.6px;top:860.20px;letter-spacing:-0.339px">package.json</div>
<svg style="left:669px;top:887.50px" width="20" height="20" viewBox="0 0 24 24"><path d="M5 3h2v2H5v5a2 2 0 0 1-2 2 2 2 0 0 1 2 2v5h2v2H5c-1.070-.27-2-.9-2-2v-4a2 2 0 0 0-2-2H0v-2h1a2 2 0 0 0 2-2V5a2 2 0 0 1 2-2m14 0a2 2 0 0 1 2 2v4a2 2 0 0 0 2 2h1v2h-1a2 2 0 0 0-2 2v4a2 2 0 0 1-2 2h-2v-2h2v-5a2 2 0 0 1 2-2 2 2 0 0 1-2-2V5h-2V3h2m-7 12a1 1 0 0 1 1 1 1 1 0 0 1-1 1 1 1 0 0 1-1-1 1 1 0 0 1 1-1m-4 0a1 1 0 0 1 1 1 1 1 0 0 1-1 1 1 1 0 0 1-1-1 1 1 0 0 1 1-1m8 0a1 1 0 0 1 1 1 1 1 0 0 1-1 1 1 1 0 0 1-1-1 1 1 0 0 1 1-1z" fill="#fbc02d"/></svg>
<div class="tr" style="left:696.6px;top:887.70px;letter-spacing:-0.009px">project.config.json</div>
<svg style="left:669px;top:915.00px" width="20" height="20" viewBox="0 0 24 24"><path d="M5 3h2v2H5v5a2 2 0 0 1-2 2 2 2 0 0 1 2 2v5h2v2H5c-1.070-.27-2-.9-2-2v-4a2 2 0 0 0-2-2H0v-2h1a2 2 0 0 0 2-2V5a2 2 0 0 1 2-2m14 0a2 2 0 0 1 2 2v4a2 2 0 0 0 2 2h1v2h-1a2 2 0 0 0-2 2v4a2 2 0 0 1-2 2h-2v-2h2v-5a2 2 0 0 1 2-2 2 2 0 0 1-2-2V5h-2V3h2m-7 12a1 1 0 0 1 1 1 1 1 0 0 1-1 1 1 1 0 0 1-1-1 1 1 0 0 1 1-1m-4 0a1 1 0 0 1 1 1 1 1 0 0 1-1 1 1 1 0 0 1-1-1 1 1 0 0 1 1-1m8 0a1 1 0 0 1 1 1 1 1 0 0 1-1 1 1 1 0 0 1-1-1 1 1 0 0 1 1-1z" fill="#fbc02d"/></svg>
<div class="tr" style="left:696.6px;top:915.20px;letter-spacing:-0.119px">project.private.config.js...</div>
<svg style="left:669px;top:942.50px" width="20" height="20" viewBox="0 0 24 24"><path d="M5 3h2v2H5v5a2 2 0 0 1-2 2 2 2 0 0 1 2 2v5h2v2H5c-1.070-.27-2-.9-2-2v-4a2 2 0 0 0-2-2H0v-2h1a2 2 0 0 0 2-2V5a2 2 0 0 1 2-2m14 0a2 2 0 0 1 2 2v4a2 2 0 0 0 2 2h1v2h-1a2 2 0 0 0-2 2v4a2 2 0 0 1-2 2h-2v-2h2v-5a2 2 0 0 1 2-2 2 2 0 0 1-2-2V5h-2V3h2m-7 12a1 1 0 0 1 1 1 1 1 0 0 1-1 1 1 1 0 0 1-1-1 1 1 0 0 1 1-1m-4 0a1 1 0 0 1 1 1 1 1 0 0 1-1 1 1 1 0 0 1-1-1 1 1 0 0 1 1-1m8 0a1 1 0 0 1 1 1 1 1 0 0 1-1 1 1 1 0 0 1-1-1 1 1 0 0 1 1-1z" fill="#fbc02d"/></svg>
<div class="tr" style="left:696.6px;top:942.70px;letter-spacing:-0.064px">tsconfig.json</div>
<div class="abs" style="left:626px;top:974px;width:249px;height:21px;background:#383838"></div>
<svg style="left:636px;top:982px" width="8" height="11"><path d="M0.800 0.800l5.200 4.600-5.200 4.600z" fill="#c5c5c5"/></svg>
<div class="t cj" style="left:651px;top:978px;font-size:13.75px;line-height:20px;color:#c8c8c8;font-weight:bold">大纲</div>
<div class="abs" style="left:626px;top:995px;width:1294px;height:35px;background:#383838"></div>
<svg style="left:646px;top:1004px" width="64" height="18" fill="none" stroke="#a8a8a8" stroke-width="1.200"><circle cx="8" cy="9" r="7"/><path d="M5.200 6.200l5.600 5.600M10.800 6.200l-5.600 5.600"/><path d="M41.500 2.800l7.300 12.700h-14.600z" stroke-linejoin="round"/><path d="M41.500 7.500v4.200M41.500 13v1.300"/></svg>
<div class="t" style="left:666px;top:1003px;font-size:15px;line-height:18px;color:#a8a8a8">0</div>
<div class="t" style="left:700px;top:1003px;font-size:15px;line-height:18px;color:#a8a8a8">0</div>
<div class="t" style="left:1616px;top:1003px;font-size:14.2px;line-height:18px;color:#a8a8a8"><span class="cj">行</span> 3<span class="cj">，列</span> 67</div>
<div class="t" style="left:1713px;top:1003px;font-size:14.2px;line-height:18px;color:#a8a8a8"><span class="cj">空格</span>: 2</div>
<div class="t" style="left:1779px;top:1003px;font-size:14.2px;line-height:18px;color:#a8a8a8">UTF-8</div>
<div class="t" style="left:1838px;top:1003px;font-size:14.2px;line-height:18px;color:#a8a8a8">LF</div>
<div class="t" style="left:1872px;top:1003px;font-size:14.2px;line-height:18px;color:#a8a8a8">JSON</div>
<div class="ptab" style="left:901px;color:#9a9a9a">构建</div>
<div class="ptab" style="left:954px;color:#f2f2f2">调试器</div>
<div class="ptab" style="left:1064px;color:#9a9a9a">问题</div>
<div class="ptab" style="left:1116px;color:#9a9a9a">输出</div>
<div class="ptab" style="left:1169px;color:#9a9a9a">终端</div>
<div class="ptab" style="left:1221px;color:#9a9a9a">代码质量</div>
<div class="abs" style="left:954px;top:150.200px;width:41px;height:1.200px;background:#e0e0e0"></div>
<div class="abs" style="left:1005px;top:122px;width:34px;height:22.500px;border-radius:11.500px;background:#cc463e;color:#fff;font-size:13.500px;line-height:22.500px;text-align:center">1, 1</div>
<svg style="left:1838px;top:128px" width="58" height="14" fill="none" stroke="#e0e0e0" stroke-width="1.400"><path d="M1.500 4.500l6.500 6.200 6.500-6.200"/><path d="M43 2l10 10M53 2l-10 10"/></svg>
<div class="abs" style="left:875px;top:153px;width:1044px;height:842px;background:#242424"></div>
<div class="abs" style="left:1919px;top:153px;width:1px;height:842px;background:#333"></div>
<div class="abs" style="left:876px;top:153px;width:1043px;height:68px;background:#292a2d"></div>
<div class="abs" style="left:876px;top:186px;width:1043px;height:1px;background:#454545"></div>
<div class="abs" style="left:876px;top:220px;width:1043px;height:1px;background:#4a4a4a"></div>
<div class="abs" style="left:995px;top:153px;width:82px;height:33px;background:#000"></div>
<svg style="left:886px;top:159px" width="22" height="22" fill="none" stroke="#939393" stroke-width="1.500"><path d="M9 17.500h-4a2 2 0 0 1-2-2v-10.500a2 2 0 0 1 2-2h10.500a2 2 0 0 1 2 2v3.500"/><path d="M9.500 9.500l9.500 3.800-4 1.600 4.200 4.200-1.600 1.600-4.200-4.200-1.600 4z" fill="#939393" stroke="none"/></svg>
<div class="abs" style="left:919px;top:160px;width:1.500px;height:20px;background:#4a4a4a"></div>
<div class="tab" style="left:941px">Wxml</div>
<div class="tab" style="left:1008.5px">Console</div>
<div class="tab" style="left:1091px">Sources</div>
<div class="tab" style="left:1173px">Network</div>
<div class="tab" style="left:1259px">Performance</div>
<div class="tab" style="left:1372px">Memory</div>
<div class="tab" style="left:1457px">AppData</div>
<div class="tab" style="left:1544px">Storage</div>
<svg style="left:1620px;top:163px" width="14" height="12" fill="none" stroke="#c8c8c8" stroke-width="1.400"><path d="M1.500 1.500l4.500 4.500-4.500 4.500M7.500 1.500l4.500 4.500-4.500 4.500"/></svg>
<svg style="left:1733px;top:162px" width="14" height="14"><circle cx="7" cy="7" r="6.300" fill="#e8353e"/><path d="M4.600 4.600l4.800 4.800M9.400 4.600l-4.800 4.800" stroke="#fff" stroke-width="1.500"/></svg>
<div class="tab" style="left:1751px">1</div>
<svg style="left:1765.900px;top:161.300px" width="15" height="14"><path d="M7.500 2.700l5.100 9.300h-10.200z" fill="#f5bd00" stroke="#f5bd00" stroke-width="2.400" stroke-linejoin="round"/><path d="M7.500 4.700v4.500M7.500 10.300v1.700" stroke="#fff" stroke-width="1.700"/></svg>
<div class="tab" style="left:1784px">1</div>
<div class="abs" style="left:1805px;top:160px;width:1.500px;height:20px;background:#4a4a4a"></div>
<svg style="left:1818px;top:158px" width="22" height="22" viewBox="0 0 24 24"><path d="M19.140 12.940c.040-.300.060-.610.060-.940 0-.320-.020-.640-.070-.940l2.030-1.580a.490.490 0 0 0 .120-.610l-1.920-3.320a.488.488 0 0 0-.590-.220l-2.390.960c-.500-.380-1.030-.700-1.620-.940l-.360-2.540a.484.484 0 0 0-.480-.410h-3.840c-.240 0-.430.170-.470.410l-.360 2.540c-.590.240-1.130.570-1.620.940l-2.390-.960c-.220-.080-.470 0-.590.220L2.740 8.870c-.120.210-.080.470.120.610l2.030 1.580c-.050.300-.090.630-.090.940s.2.640.7.940l-2.030 1.580a.490.490 0 0 0-.120.610l1.920 3.320c.120.220.370.290.590.220l2.390-.960c.500.380 1.030.700 1.620.940l.360 2.540c.50.240.240.410.480.410h3.840c.240 0 .440-.170.470-.410l.360-2.540c.590-.240 1.130-.560 1.620-.940l2.390.960c.220.080.470 0 .590-.220l1.920-3.320c.120-.220.070-.470-.120-.610l-2.010-1.580zM12 15.600c-1.980 0-3.600-1.620-3.600-3.600s1.620-3.600 3.600-3.600 3.600 1.620 3.600 3.600-1.620 3.600-3.600 3.600z" fill="#939393"/></svg>
<svg style="left:1862px;top:160px" width="6" height="20" fill="#939393"><circle cx="3" cy="3" r="1.800"/><circle cx="3" cy="9.500" r="1.800"/><circle cx="3" cy="16" r="1.800"/></svg>
<svg style="left:1887px;top:160px" width="24" height="20" fill="none" stroke="#727272" stroke-width="2.200"><path d="M8.900 1.600h12.100v10.200h-12.100z"/><path d="M2 6v11.800h15.500"/></svg>
<svg style="left:885px;top:194px" width="22" height="20" fill="none" stroke="#939393" stroke-width="1.500"><rect x="1.500" y="2" width="18" height="15.500"/><path d="M6.500 2v15.500"/><path d="M9.500 5.800l6 4-6 4z" fill="#939393" stroke="none"/></svg>
<svg style="left:922px;top:193px" width="20" height="20" fill="none" stroke="#939393" stroke-width="2"><circle cx="10" cy="10.300" r="7.200"/><path d="M5 5.300l10 10"/></svg>
<div class="abs" style="left:954px;top:194px;width:1.500px;height:20px;background:#4a4a4a"></div>
<div class="tab" style="left:966px;top:194.7px">appservice (#2)</div>
<svg style="left:1115px;top:198px" width="12" height="10"><path d="M1 1h9.500l-4.750 7.500z" fill="#939393"/></svg>
<div class="abs" style="left:1138px;top:194px;width:1.500px;height:20px;background:#4a4a4a"></div>
<svg style="left:1150px;top:194px" width="22" height="18" fill="#939393"><path d="M11 2.500c-4.500 0-8 3-10 6.500 2 3.500 5.500 6.500 10 6.500s8-3 10-6.500c-2-3.500-5.500-6.500-10-6.500zm0 10.800a4.300 4.300 0 1 1 0-8.600 4.300 4.300 0 0 1 0 8.600zm0-6.800a2.500 2.500 0 1 0 0 5 2.500 2.500 0 0 0 0-5z"/></svg>
<div class="abs" style="left:1185px;top:194px;width:1.500px;height:20px;background:#4a4a4a"></div>
<div class="abs" style="left:1193px;top:190px;width:217px;height:27px;background:#232323;border:1px solid #4c4c4c"></div>
<div class="tab" style="left:1198px;top:195.7px;color:#c8c8c8">Filter</div>
<div class="tab" style="left:1420px;top:194.7px">Default levels</div>
<svg style="left:1513px;top:198px" width="12" height="10"><path d="M1 1h8.500l-4.250 7z" fill="#939393"/></svg>
<div class="abs" style="left:1804px;top:194px;width:1.500px;height:20px;background:#4a4a4a"></div>
<div class="tab" style="left:1816.800px;top:194.5px;color:#9a9a9a;font-size:15.3px">3 hidden</div>
<svg style="left:1889px;top:192px" width="22" height="22" viewBox="0 0 24 24"><path d="M19.140 12.940c.040-.300.060-.610.060-.940 0-.320-.020-.640-.070-.940l2.030-1.580a.490.490 0 0 0 .120-.610l-1.920-3.320a.488.488 0 0 0-.590-.220l-2.390.960c-.500-.380-1.030-.700-1.620-.940l-.360-2.540a.484.484 0 0 0-.480-.410h-3.840c-.240 0-.430.170-.470.410l-.360 2.540c-.590.240-1.130.570-1.620.940l-2.390-.960c-.220-.080-.470 0-.590.220L2.740 8.870c-.120.210-.080.470.120.610l2.030 1.580c-.050.300-.090.630-.090.940s.2.640.7.940l-2.030 1.580a.490.490 0 0 0-.120.610l1.920 3.320c.120.220.370.290.590.220l2.390-.960c.500.380 1.030.700 1.620.940l.360 2.540c.50.240.240.410.480.410h3.840c.240 0 .440-.170.470-.410l.360-2.540c.590-.240 1.130-.560 1.620-.940l2.390.960c.220.080.470 0 .590-.220l1.920-3.320c.120-.220.070-.470-.120-.610l-2.010-1.580zM12 15.600c-1.980 0-3.600-1.620-3.600-3.600s1.620-3.600 3.600-3.600 3.600 1.620 3.600 3.600-1.620 3.600-3.600 3.600z" fill="#939393"/></svg>
<div class="mono abs" style="left:906.5px;top:227px;color:#e6e6e6">[system] WeChatLib: 3.0.0 (2023.8.15 01:35:31)</div>
<div class="mono abs" style="right:37px;top:227px;color:#dcdcdc;text-decoration:underline">WAServiceMainContext…322099893&amp;v=3.0.0:1</div>
<div class="abs" style="left:876px;top:246px;width:1043px;height:1px;background:#3a3a3a"></div>
<div class="mono abs" style="left:906.5px;top:252px;color:#e6e6e6">Current Wechat version do not support asynchronous getSystemInfo.</div>
<div class="mono abs" style="right:37px;top:252px;color:#dcdcdc;text-decoration:underline">WAServiceMainContext…322099893&amp;v=3.0.0:1</div>
<div class="mono abs" style="left:906.5px;top:270px;color:#e6e6e6">"wx.getSystemInfoAsync" will be finished by synchronous implementation.</div>
<div class="abs" style="left:876px;top:290px;width:1043px;height:1px;background:#3a3a3a"></div>
<div class="mono abs" style="left:906.5px;top:296px;color:#e6e6e6">[system] Subpackages: N/A</div>
<div class="mono abs" style="right:37px;top:296px;color:#dcdcdc;text-decoration:underline">WAServiceMainContext…322099893&amp;v=3.0.0:1</div>
<div class="abs" style="left:876px;top:315px;width:1043px;height:1px;background:#3a3a3a"></div>
<div class="mono abs" style="left:906.5px;top:321px;color:#e6e6e6">[system] LazyCodeLoading: true</div>
<div class="mono abs" style="right:37px;top:321px;color:#dcdcdc;text-decoration:underline">WAServiceMainContext…322099893&amp;v=3.0.0:1</div>
<div class="abs" style="left:876px;top:341px;width:1043px;height:1px;background:#3a3a3a"></div>
<div class="mono abs" style="left:906.5px;top:347px;color:#e6e6e6">Lazy code loading is enabled. Only injecting required components.</div>
<div class="mono abs" style="right:37px;top:347px;color:#dcdcdc;text-decoration:underline">WAServiceMainContext…322099893&amp;v=3.0.0:1</div>
<div class="abs" style="left:876px;top:366px;width:1043px;height:26px;background:#332b00;border-top:1px solid #665500;border-bottom:1px solid #665500"></div>
<svg style="left:883.400px;top:371px" width="15" height="14"><path d="M7.500 2.300l4.900 9.400h-9.800z" fill="#f5bd00" stroke="#f5bd00" stroke-width="2.400" stroke-linejoin="round"/><path d="M7.500 4.700v4.500M7.500 10.300v1.700" stroke="#fff" stroke-width="1.700"/></svg>
<div class="mono abs" style="left:906.5px;top:371px;color:#f0ead0">[<i>基础库</i>] <i>正在使用灰度中的基础库</i> 3.0.0 <i>进行调试。如有问题，请前往工具栏</i>-<i>详情</i>-<i>本地设置更改基础库版本。</i></div>
<div class="abs" style="left:876px;top:392px;width:1043px;height:242px;background:#290000;border-top:1px solid #5c0000;border-bottom:1px solid #5c0000"></div>
<svg style="left:883.800px;top:397px" width="14" height="14"><circle cx="7" cy="7" r="5.850" fill="#e8353e"/><path d="M4.900 4.900l4.200 4.200M9.100 4.900l-4.200 4.200" stroke="#fff" stroke-width="1.500"/></svg>
<div class="mono abs" style="left:906.5px;top:398px;color:#fa8484">[] Cannot generate sub context file components/transparent-video/index.common.js</div>
<div class="mono abs" style="left:906.5px;top:416px;color:#fa8484">Error: Cannot generate sub context file components/transparent-video/index.common.js</div>
<div class="mono abs" style="left:906.5px;top:434px;color:#fa8484">    at exports.getAppserviceSubContextFile (F:\Software Study\<i>微信</i>web<i>开发者工具</i></div>
<div class="mono abs" style="left:906.5px;top:452px;color:#fa8484">\code\package.nw\core.wxvpkg\439ca14ac0daf6eed2135b27d0982478.js:2:4385)</div>
<div class="mono abs" style="left:906.5px;top:470px;color:#fa8484">    at w (F:\Software Study\<i>微信</i>web<i>开发者工具</i>\code\package.nw\core.wxvpkg\495e925a533a66fcf52d8322e2c7e133.js:2:4899)</div>
<div class="mono abs" style="left:906.5px;top:488px;color:#fa8484">    at Proxy.exports.getAppServiceResource (F:\Software Study\<i>微信</i>web<i>开发者工具</i></div>
<div class="mono abs" style="left:906.5px;top:506px;color:#fa8484">\code\package.nw\core.wxvpkg\495e925a533a66fcf52d8322e2c7e133.js:2:9368)</div>
<div class="mono abs" style="left:906.5px;top:524px;color:#fa8484">    at processTicksAndRejections (node:internal<span style="color:#e6e6e6;text-decoration:underline">/process/task_queues:96</span>:5)</div>
<div class="mono abs" style="left:906.5px;top:542px;color:#fa8484">    at async Proxy.getAppServiceSource (F:\Software Study\<i>微信</i>web<i>开发者工具</i></div>
<div class="mono abs" style="left:906px;top:559px;height:18px;color:#fb8c8c;background:#a1a1a1;padding-top:1px;padding-left:.5px">\code\package.nw\core.wxvpkg\b1646961ef2f09d5fda027ffc1432b60.js:2:1463) </div>
<div class="mono abs" style="left:906px;top:577px;height:18px;color:#fb8c8c;background:#a1a1a1;padding-top:1px;padding-left:.5px">    at async Object.M [as /appservice] (F:\Software Study\<i>微信</i>web<i>开发者工具</i> </div>
<div class="mono abs" style="left:906px;top:595px;height:18px;color:#fb8c8c;background:#a1a1a1;padding-top:1px;padding-left:.5px">\code\package.nw\core.wxvpkg\05dbaa91810443fa416a7b0a6e9be807.js:2:2739) </div>
<div class="mono abs" style="left:906px;top:613px;height:18px;color:#fb8c8c;background:#a1a1a1;padding-top:1px;padding-left:.5px">(env: Windows,mp,1.06.2307260; lib: 3.0.0)</div>
<div class="mono abs" style="left:906.5px;top:639px;color:#e6e6e6">MMPHYS [Phys3D] InitPhysics</div>
<div class="mono abs" style="right:37px;top:639px;color:#dcdcdc;text-decoration:underline">VM374 ENGINE_WASM.js:1</div>
<div class="abs" style="left:876px;top:659px;width:1043px;height:1px;background:#3a3a3a"></div>
<div class="mono abs" style="left:906.5px;top:665px;color:#e6e6e6">0f15tlGa1rd1RF0tNIHa135zen15tlGY</div>
<div class="mono abs" style="right:37px;top:665px;color:#dcdcdc;text-decoration:underline">app.ts:13</div>
<div class="abs" style="left:876px;top:684px;width:1043px;height:1px;background:#3a3a3a"></div>
<div class="mono abs" style="left:906.5px;top:690px;color:#e6e6e6">[xr-frame] scene ready</div>
<div class="mono abs" style="right:37px;top:690px;color:#dcdcdc;text-decoration:underline">WAServiceMainContext…322099893&amp;v=3.0.0:1</div>
<div class="abs" style="left:876px;top:710px;width:1043px;height:1px;background:#3a3a3a"></div>
<div class="mono abs" style="left:906.5px;top:716px;color:#e6e6e6">[system] Launch Time: 2329 ms</div>
<div class="mono abs" style="right:37px;top:716px;color:#dcdcdc;text-decoration:underline">WAServiceMainContext…322099893&amp;v=3.0.0:1</div>
<div class="abs" style="left:876px;top:734px;width:1043px;height:1px;background:#3a3a3a"></div>
<svg style="left:886px;top:741px" width="8" height="12" fill="none" stroke="#3b82f6" stroke-width="1.700"><path d="M1.500 1.500l4.500 4.500-4.500 4.500"/></svg>
</body></html>
